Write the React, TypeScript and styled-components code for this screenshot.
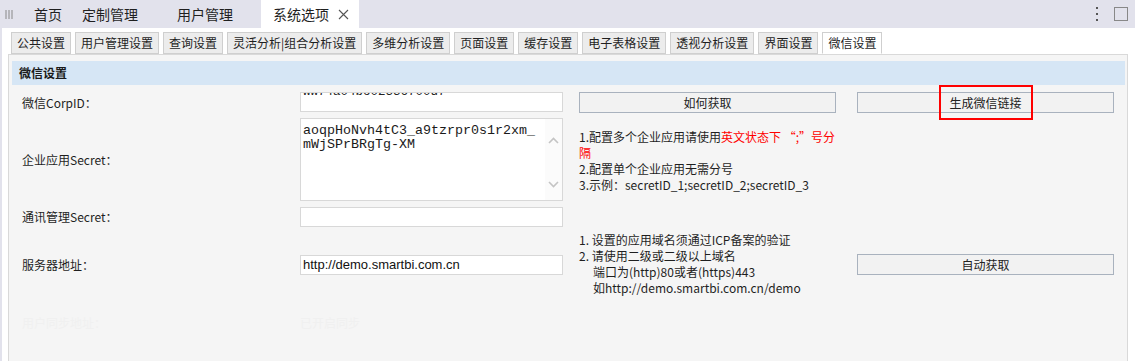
import React from "react";
import styled, { createGlobalStyle } from "styled-components";

const CJK = `"Noto Sans CJK SC", "Noto Sans", sans-serif`;

const GlobalStyle = createGlobalStyle`
	html, body {
		margin: 0;
		padding: 0;
		background: #ffffff;
		overflow: hidden;
	}
	body {
		font-family: ${CJK};
		color: #222;
	}
`;

const TopBar = styled.div`
	height: 28px;
	background: #e2e2ec;
	display: flex;
	align-items: stretch;
`;
const Grip = styled.div`
	width: 18px;
	display: flex;
	align-items: center;
	justify-content: center;
	padding-right: 4px;
	svg {
		width: 8px;
		height: 9px;
	}
`;
const TopTab = styled.div<{ w: number; active?: boolean }>`
	width: ${(p) => p.w}px;
	box-sizing: border-box;
	padding-left: 12px;
	display: flex;
	align-items: center;
	gap: 9px;
	font-size: 14px;
	color: #1f1f1f;
	background: ${(p) => (p.active ? "#ffffff" : "transparent")};
	svg {
		width: 11px;
		height: 11px;
	}
`;
const Spacer = styled.div`
	flex: 1;
`;
const WinTools = styled.div`
	display: flex;
	align-items: center;
	gap: 16px;
	padding-right: 7px;
`;
const Dots = styled.div`
	display: flex;
	flex-direction: column;
	gap: 4px;
	span {
		width: 2px;
		height: 2px;
		background: #555;
	}
`;
const MaxBox = styled.div`
	width: 12px;
	height: 12px;
	border: 1px solid #888;
`;

const Main = styled.div`
	border-left: 2px solid #e2e2ec;
	height: 333px;
`;
const SubTabs = styled.div`
	display: flex;
	gap: 4px;
	padding: 4px 0 0 9px;
	position: relative;
	z-index: 1;
`;
const SubTab = styled.div<{ active?: boolean }>`
	height: 20px;
	padding: 0 5px;
	border: 1px solid #cfcfcf;
	border-bottom-color: ${(p) => (p.active ? "#ffffff" : "#cfcfcf")};
	background: ${(p) => (p.active ? "#ffffff" : "#ececec")};
	margin-bottom: ${(p) => (p.active ? "-1px" : "0")};
	font-size: 12px;
	line-height: 20px;
	white-space: nowrap;
	color: #1f1f1f;
`;
const Panel = styled.div`
	margin-left: 6px;
	width: 1120px;
	box-sizing: border-box;
	height: 320px;
	border: 1px solid #d9d9d9;
	background: #f5f5f5;
	padding: 6px 2px 0 3px;
`;
const SectionHead = styled.div`
	height: 24px;
	background: #d6e6f5;
	padding-left: 7px;
	font-size: 12px;
	font-weight: bold;
	line-height: 24px;
	color: #1a1a1a;
`;
const Form = styled.div`
	display: grid;
	grid-template-columns: 278px 279px 278px 257px;
	grid-template-rows: 22px 83px 21px 65px 40px;
	row-gap: 5px;
	margin: 6px 0 0 10px;
	align-items: center;
`;
const Label = styled.div<{ faint?: boolean }>`
	font-size: 12px;
	color: ${(p) => (p.faint ? "#f0f0f0" : "#1f1f1f")};
`;
const InputBox = styled.div`
	width: 263px;
	height: 20px;
	box-sizing: border-box;
	background: #fff;
	border: 1px solid #d8d8d8;
	overflow: hidden;
	padding-left: 2px;
`;
const ClippedValue = styled.div`
	font-family: "Liberation Mono", monospace;
	font-size: 12.5px;
	line-height: 14px;
	margin-top: -8px;
	color: #222;
`;
const PlainValue = styled.div`
	font-family: "Liberation Sans", Arial, sans-serif;
	font-size: 13px;
	line-height: 18px;
	color: #111;
`;
const FaintValue = styled.div`
	font-size: 12px;
	color: #f0f0f0;
`;
const AreaBox = styled.div`
	width: 263px;
	height: 83px;
	box-sizing: border-box;
	background: #fff;
	border: 1px solid #d8d8d8;
	display: flex;
`;
const AreaText = styled.div`
	flex: 1;
	padding: 5px 0 0 2px;
	font-family: "Liberation Mono", "Courier New", monospace;
	font-size: 13.33px;
	line-height: 14px;
	color: #1a1a1a;
	span {
		display: block;
		width: 233px;
		word-break: break-all;
	}
`;
const ScrollCol = styled.div`
	width: 17px;
	background: #fbfbfb;
	display: flex;
	flex-direction: column;
	justify-content: space-between;
	align-items: center;
	padding: 18px 0 12px;
	svg {
		width: 11px;
		height: 7px;
	}
`;
const Button = styled.button`
	position: relative;
	width: 257px;
	height: 21px;
	box-sizing: border-box;
	border: 1px solid #a9b2be;
	background: #f2f2f2;
	font-family: ${CJK};
	font-size: 12px;
	color: #222;
	padding: 0;
	line-height: 19px;
`;
const Highlight = styled.span`
	position: absolute;
	left: 81px;
	top: -8px;
	width: 94px;
	height: 35px;
	box-sizing: border-box;
	border: 2px solid #f00;
`;
const Hints = styled.div<{ top?: number }>`
	align-self: start;
	margin-top: ${(p) => p.top ?? 0}px;
	font-size: 12px;
	line-height: 16px;
	color: #1f1f1f;
	white-space: nowrap;
`;
const Red = styled.span`
	color: #ff0000;
`;
const Indent = styled.div`
	padding-left: 14px;
`;
const Empty = styled.div``;

function App() {
	const topTabs = [
		{ text: "首页", w: 48 },
		{ text: "定制管理", w: 95 },
		{ text: "用户管理", w: 96 },
	];
	const subTabs = [
		"公共设置",
		"用户管理设置",
		"查询设置",
		"灵活分析|组合分析设置",
		"多维分析设置",
		"页面设置",
		"缓存设置",
		"电子表格设置",
		"透视分析设置",
		"界面设置",
	];

	return (
		<>
			<GlobalStyle />
			<TopBar>
				<Grip>
					<svg viewBox="0 0 8 9">
						<path d="M1 0V9M4 0V9M7 0V9" stroke="#888" strokeWidth={1} />
					</svg>
				</Grip>
				{topTabs.map((t) => (
					<TopTab key={t.text} w={t.w}>
						{t.text}
					</TopTab>
				))}
				<TopTab w={98} active>
					系统选项
					<svg viewBox="0 0 11 11">
						<path d="M1 1L10 10M10 1L1 10" stroke="#555" strokeWidth={1.1} />
					</svg>
				</TopTab>
				<Spacer />
				<WinTools>
					<Dots>
						<span />
						<span />
						<span />
					</Dots>
					<MaxBox />
				</WinTools>
			</TopBar>
			<Main>
				<SubTabs>
					{subTabs.map((t) => (
						<SubTab key={t}>{t}</SubTab>
					))}
					<SubTab active>微信设置</SubTab>
				</SubTabs>
				<Panel>
					<SectionHead>微信设置</SectionHead>
					<Form>
						{/* corp id */}
						<Label>微信CorpID：</Label>
						<InputBox>
							<ClippedValue>ww74a04bc02336700d7</ClippedValue>
						</InputBox>
						<Button>如何获取</Button>
						<Button>
							生成微信链接
							<Highlight />
						</Button>

						{/* app secret */}
						<Label>企业应用Secret：</Label>
						<AreaBox>
							<AreaText>
								<span>aoqpHoNvh4tC3_a9tzrpr0s1r2xm_mWjSPrBRgTg-XM</span>
							</AreaText>
							<ScrollCol>
								<svg viewBox="0 0 11 7">
									<path d="M1 6L5.5 1.5L10 6" fill="none" stroke="#c4c4c4" strokeWidth={1.6} />
								</svg>
								<svg viewBox="0 0 11 7">
									<path d="M1 1L5.5 5.5L10 1" fill="none" stroke="#c4c4c4" strokeWidth={1.6} />
								</svg>
							</ScrollCol>
						</AreaBox>
						<Hints top={11}>
							<div>
								1.配置多个企业应用请使用<Red>英文状态下 “;”号分</Red>
							</div>
							<div>
								<Red>隔</Red>
							</div>
							<div>2.配置单个企业应用无需分号</div>
							<div>3.示例：secretID_1;secretID_2;secretID_3</div>
						</Hints>
						<Empty />

						{/* contact secret */}
						<Label>通讯管理Secret：</Label>
						<InputBox />
						<Empty />
						<Empty />

						{/* server */}
						<Label>服务器地址：</Label>
						<InputBox>
							<PlainValue>http://demo.smartbi.com.cn</PlainValue>
						</InputBox>
						<Hints>
							<div>1. 设置的应用域名须通过ICP备案的验证</div>
							<div>2. 请使用二级或二级以上域名</div>
							<Indent>端口为(http)80或者(https)443</Indent>
							<Indent>如http://demo.smartbi.com.cn/demo</Indent>
						</Hints>
						<Button>自动获取</Button>

						{/* faint row */}
						<Label faint>用户同步地址：</Label>
						<FaintValue>已开启同步</FaintValue>
						<Empty />
						<Empty />
					</Form>
				</Panel>
			</Main>
		</>
	);
}

export default App;
